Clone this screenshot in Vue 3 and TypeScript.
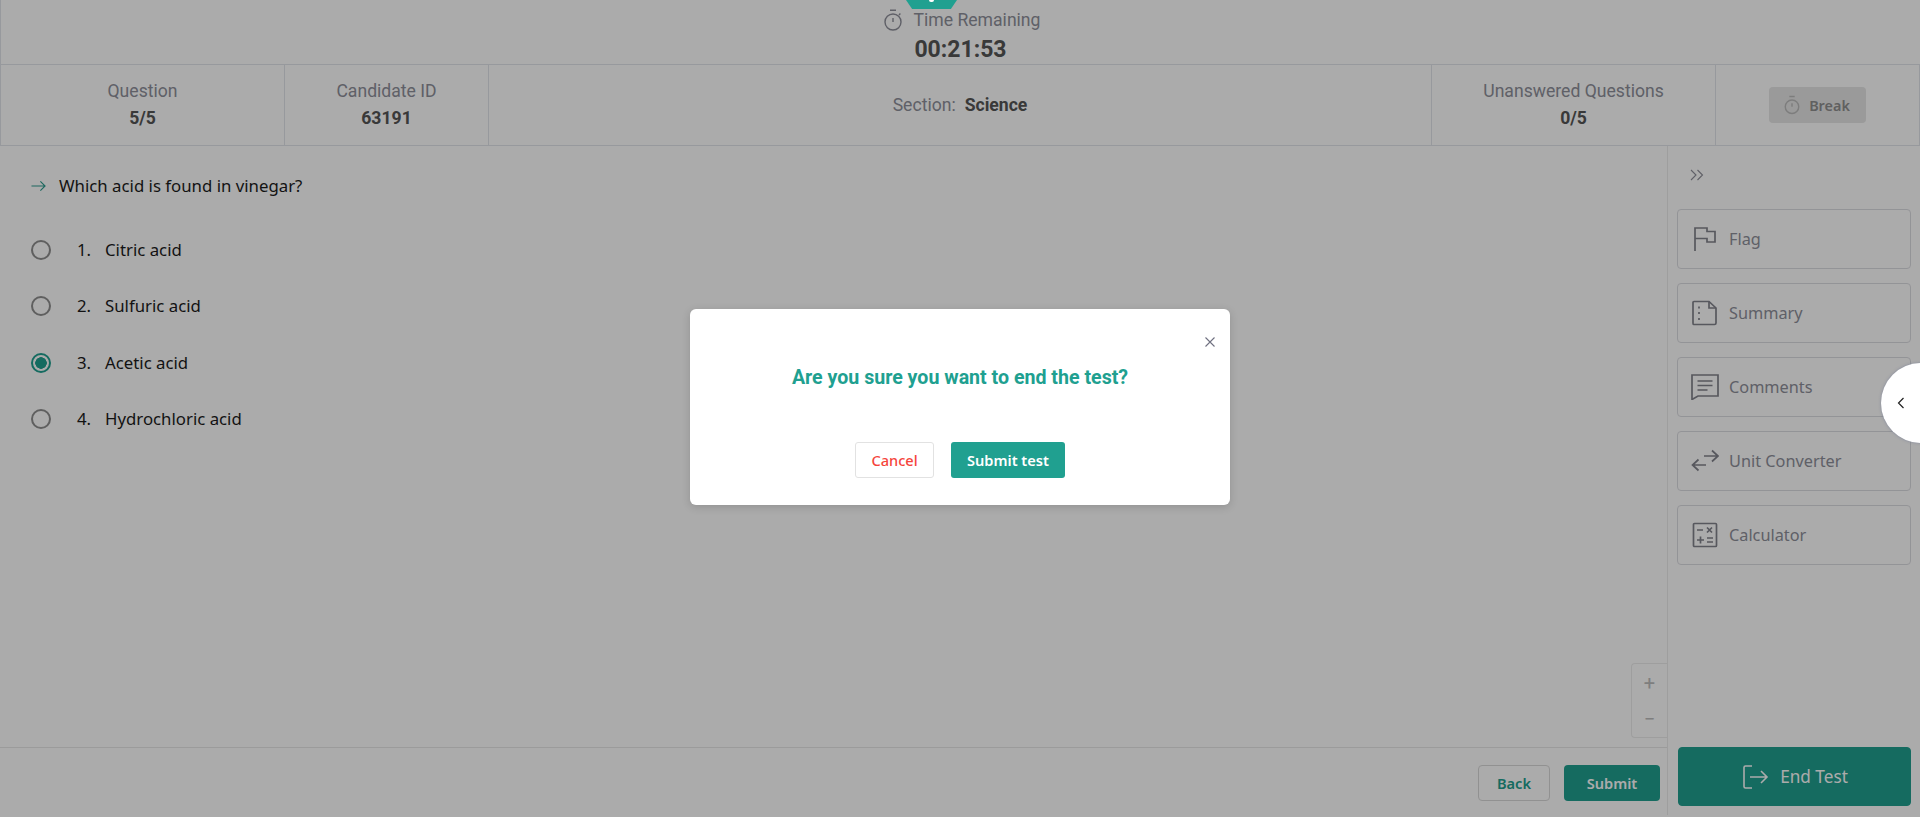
<template>
  <div class="exam-page">
    <header class="timer-bar">
      <div class="timer-label">
        <svg class="timer-icon" viewBox="0 0 20 22" fill="none" stroke="currentColor" stroke-width="1.4">
          <circle cx="10" cy="13" r="8" />
          <path d="M7 1.2h6M10 9v4M16 6l1.4-1.4" />
        </svg>
        <span>Time Remaining</span>
      </div>
      <div class="timer-value">{{ timeLeft }}</div>
    </header>

    <section class="info-row">
      <div class="info-cell">
        <span class="info-label">Question</span>
        <strong>5/5</strong>
      </div>
      <div class="info-cell">
        <span class="info-label">Candidate ID</span>
        <strong>63191</strong>
      </div>
      <div class="info-cell section-cell">
        <span class="info-label">Section:</span>
        <strong>Science</strong>
      </div>
      <div class="info-cell">
        <span class="info-label">Unanswered Questions</span>
        <strong>0/5</strong>
      </div>
      <div class="info-cell">
        <button class="break-btn">
          <svg viewBox="0 0 20 22" fill="none" stroke="currentColor" stroke-width="1.6">
            <circle cx="10" cy="13" r="7.5" />
            <path d="M7 1.5h6M10 9v4" />
          </svg>
          Break
        </button>
      </div>
    </section>

    <main class="main">
      <div class="content">
        <div class="question-area">
          <div class="question">
            <svg class="question-arrow" viewBox="0 0 16 12" fill="none" stroke="currentColor" stroke-width="1.2">
              <path d="M0.5 6h14.5M10 1l5 5-5 5" />
            </svg>
            <span>Which acid is found in vinegar?</span>
          </div>
          <ul class="options">
            <li v-for="(option, index) in options" :key="option" class="option">
              <span class="radio" :class="{ checked: index === selected }"></span>
              <span class="option-num">{{ index + 1 }}.</span>
              <span>{{ option }}</span>
            </li>
          </ul>
          <div class="zoom-box">
            <span>+</span>
            <span>−</span>
          </div>
        </div>
        <footer class="footer">
          <button class="btn-back">Back</button>
          <button class="btn-submit">Submit</button>
        </footer>
      </div>

      <aside class="sidebar">
        <svg class="collapse-icon" viewBox="0 0 14 12" fill="none" stroke="currentColor" stroke-width="1.1">
          <path d="M1 1l5 5-5 5M7.500 1l5 5-5 5" />
        </svg>
        <button v-for="tool in tools" :key="tool.label" class="tool-btn">
          <span class="tool-icon">
            <svg viewBox="0 0 28 26" fill="none" stroke="currentColor" stroke-width="1.7">
              <path v-for="d in tool.paths" :key="d" :d="d" />
            </svg>
          </span>
          {{ tool.label }}
        </button>
        <button class="end-btn">
          <svg viewBox="0 0 26 24" fill="none" stroke="currentColor" stroke-width="1.6">
            <path d="M9 1H2.500Q1 1 1 2.500v19Q1 23 2.500 23H9M7 12h17M18 6l6 6-6 6" />
          </svg>
          End Test
        </button>
      </aside>
    </main>

    <div class="overlay">
      <div class="modal">
        <svg class="modal-close" viewBox="0 0 10 10" fill="none" stroke="currentColor" stroke-width="1.1">
          <path d="M0.500 0.500l9 9M9.500 0.500l-9 9" />
        </svg>
        <h2>Are you sure you want to end the test?</h2>
        <div class="modal-actions">
          <button class="btn-cancel">Cancel</button>
          <button class="btn-confirm">Submit test</button>
        </div>
      </div>
    </div>

    <div class="top-badge"></div>
    <button class="side-handle">
      <svg viewBox="0 0 8 12" fill="none" stroke="currentColor" stroke-width="1.2">
        <path d="M6.500 1l-5 5 5 5" />
      </svg>
    </button>
  </div>
</template>

<script setup lang="ts">
import { ref } from 'vue'

const timeLeft = ref('00:21:53')
const selected = ref(2)
const options = ['Citric acid', 'Sulfuric acid', 'Acetic acid', 'Hydrochloric acid']

const tools = [
  { label: 'Flag', paths: ['M4 25V2h12v3.500h8V16H16v-3.500H4'] },
  {
    label: 'Summary',
    paths: [
      'M3 1.500h15l7 6.500v15q0 1.500-1.500 1.500h-21Q2 24.500 2 23V2.500Q2 1.500 3 1.500z',
      'M18 1.500V8h7',
      'M8 6.500v2M8 12v2M8 18v2',
    ],
  },
  {
    label: 'Comments',
    paths: [
      'M1 1h26v21H7l-6 3.500z',
      'M6.500 7h15M6.500 11.500h15M6.500 16h10',
    ],
  },
  {
    label: 'Unit Converter',
    paths: ['M13 8h14M21 2.500l6 5.500-6 5.500', 'M15 17H1.500M7.500 11.500l-6 5.500 6 5.500'],
  },
  {
    label: 'Calculator',
    paths: [
      'M3.500 1.500h21q1 0 1 1v21q0 1-1 1h-21q-1 0-1-1v-21q0-1 1-1z',
      'M6 8h6M16 5.500l5 5M21 5.500l-5 5M6 18h7M9.500 14.500v7M16 16h6M16 20h6',
    ],
  },
]
</script>

<style>
html,
body {
  margin: 0;
  overflow: hidden;
  background: #fff;
}
</style>

<style scoped>
* {
  box-sizing: border-box;
}

.exam-page {
  position: relative;
  width: 1920px;
  height: 817px;
  overflow: hidden;
  font-family: Roboto, sans-serif;
  color: #1c1c1c;
}

button {
  font-family: "Noto Sans", sans-serif;
  cursor: pointer;
}

.timer-bar {
  height: 65px;
  padding-top: 8px;
  border-left: 1px solid #e2e4ea;
  border-bottom: 1px solid #e2e4ea;
  text-align: center;
}

.timer-label {
  display: flex;
  justify-content: center;
  align-items: center;
  gap: 11px;
  height: 24px;
  padding-left: 2px;
  font-size: 17.6px;
  color: #8e8f9a;
}

.timer-icon {
  width: 20px;
  height: 22px;
  color: #8e8f9a;
}

.timer-value {
  margin-top: 5px;
  line-height: 26px;
  font-size: 23px;
  font-weight: 700;
  color: #555;
}

.info-row {
  display: grid;
  grid-template-columns: 284px 204px 943px 284px 1fr;
  height: 81px;
  border-bottom: 1px solid #e2e4ea;
  border-left: 1px solid #e2e4ea;
  border-right: 1px solid #e2e4ea;
}

.info-cell {
  display: flex;
  flex-direction: column;
  align-items: center;
  justify-content: center;
  gap: 6px;
  border-right: 1px solid #e2e4ea;
  font-size: 17.6px;
  line-height: 21px;
}

.info-cell:last-child {
  border-right: none;
}

.info-cell strong {
  color: #555;
  font-weight: 700;
}

.info-label {
  color: #8e8f9a;
}

.section-cell {
  flex-direction: row;
  gap: 9px;
}

.break-btn {
  display: flex;
  align-items: center;
  justify-content: center;
  gap: 8px;
  width: 97px;
  height: 36px;
  padding-right: 8px;
  border: none;
  border-radius: 4px;
  background: #e6e6e6;
  color: #8f8f8f;
  font-size: 14.4px;
  font-weight: 600;
}

.break-btn svg {
  width: 18px;
  height: 20px;
  color: #bbb;
}

.main {
  display: flex;
  height: 669px;
}

.content {
  flex: 1;
  display: flex;
  flex-direction: column;
}

.question-area {
  position: relative;
  flex: 1;
  padding: 28px 0 0 31px;
  font-family: "Noto Sans", sans-serif;
  font-size: 16.8px;
  line-height: 24px;
}

.question {
  display: flex;
  align-items: center;
  gap: 13px;
}

.question-arrow {
  width: 15px;
  height: 12px;
  color: #2d9c8e;
}

.options {
  display: flex;
  flex-direction: column;
  gap: 32.3px;
  margin: 40px 0 0;
  padding: 0;
  list-style: none;
}

.option {
  display: flex;
  align-items: center;
}

.radio {
  width: 20px;
  height: 20px;
  margin-right: 26px;
  border: 2px solid #8e8e8e;
  border-radius: 50%;
}

.radio.checked {
  border-color: #20a090;
  background: radial-gradient(circle, #20a090 0 5.500px, transparent 6px);
}

.option-num {
  width: 28px;
}

.zoom-box {
  position: absolute;
  right: 0;
  bottom: 9px;
  display: flex;
  flex-direction: column;
  width: 36px;
  height: 75px;
  padding-top: 1px;
  border: 1px solid #ececec;
  border-right: none;
  border-radius: 4px 0 0 4px;
  text-align: center;
  font-family: Roboto, sans-serif;
  font-size: 20px;
  line-height: 36px;
  color: #bdbdbd;
}

.footer {
  display: flex;
  justify-content: flex-end;
  gap: 14px;
  height: 68px;
  padding: 17px 7px 0 0;
  border-top: 1px solid #e8e8e8;
}

.btn-back,
.btn-submit {
  height: 36px;
  border-radius: 4px;
  font-size: 14.6px;
  font-weight: 600;
}

.btn-back {
  width: 72px;
  border: 1px solid #d9d9d9;
  background: #fff;
  color: #20a090;
}

.btn-submit {
  width: 96px;
  border: none;
  background: #20a090;
  color: #fff;
}

.sidebar {
  display: flex;
  flex-direction: column;
  gap: 14px;
  width: 253px;
  padding: 23px 9px 9px;
  border-left: 1px solid #ececec;
}

.collapse-icon {
  width: 14px;
  height: 12px;
  margin: 0 0 14px 13px;
  color: #8f909a;
}

.tool-btn {
  display: flex;
  align-items: center;
  gap: 10px;
  height: 60px;
  padding: 0 0 0 13px;
  border: 1px solid #dcdde2;
  border-radius: 4px;
  background: #fff;
  color: #8e8f9a;
  font-size: 16.3px;
}

.tool-icon {
  display: flex;
  color: #82838c;
}

.tool-icon svg {
  width: 28px;
  height: 26px;
}

.end-btn {
  display: flex;
  align-items: center;
  justify-content: center;
  gap: 11px;
  height: 59px;
  margin: auto 0 0 1px;
  padding-left: 8px;
  border: 1px solid #20a090;
  border-radius: 4px;
  background: #20a090;
  color: #fff;
  font-size: 17.2px;
}

.end-btn svg {
  width: 26px;
  height: 24px;
}

.overlay {
  position: absolute;
  inset: 0;
  display: flex;
  align-items: center;
  justify-content: center;
  background: rgba(0, 0, 0, 0.33);
}

.modal {
  position: relative;
  display: flex;
  flex-direction: column;
  align-items: center;
  width: 540px;
  height: 196px;
  margin-top: -3px;
  padding-top: 56px;
  border-radius: 6px;
  background: #fff;
  box-shadow: 0 2px 8px rgba(0, 0, 0, 0.15);
}

.modal h2 {
  margin: 0;
  font-size: 19.6px;
  line-height: 26px;
  font-weight: 700;
  color: #20a090;
}

.modal-close {
  position: absolute;
  top: 28px;
  right: 15px;
  width: 10px;
  height: 10px;
  color: #6f7080;
}

.modal-actions {
  display: flex;
  gap: 17px;
  margin-top: 51px;
}

.btn-cancel,
.btn-confirm {
  height: 36px;
  border-radius: 3px;
  font-size: 14.6px;
}

.btn-cancel {
  width: 79px;
  border: 1px solid #e2e2e2;
  background: #fff;
  color: #f5443b;
  font-weight: 500;
}

.btn-confirm {
  width: 114px;
  border: none;
  background: #20a090;
  color: #fff;
  font-weight: 600;
}

.top-badge {
  position: absolute;
  top: 0;
  left: 906px;
  width: 51px;
  height: 9px;
  background: #20a090;
  clip-path: polygon(0 0, 100% 0, 88% 100%, 12% 100%);
}

.top-badge::after {
  content: "";
  position: absolute;
  top: 0;
  left: 23px;
  width: 5px;
  height: 2px;
  border-radius: 0 0 3px 3px;
  background: #fff;
}

.side-handle {
  position: absolute;
  top: 363px;
  left: 1881px;
  display: flex;
  align-items: center;
  width: 80px;
  height: 80px;
  padding: 0 0 0 16px;
  border: none;
  border-radius: 50%;
  background: #fff;
  box-shadow: 0 0 3px rgba(90, 100, 140, 0.5);
  color: #222;
}

.side-handle svg {
  width: 8px;
  height: 12px;
}
</style>
